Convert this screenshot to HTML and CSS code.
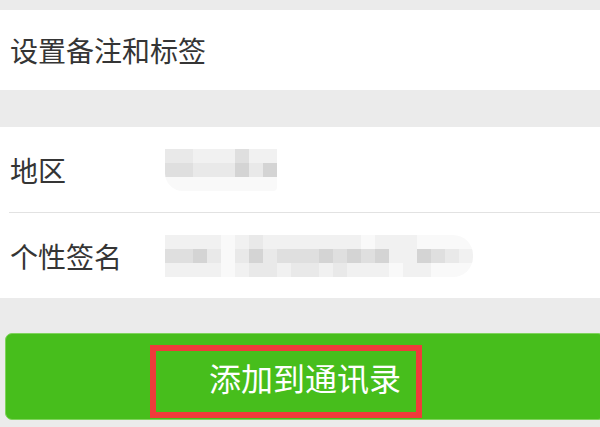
FILE: index.html
```html
<!DOCTYPE html>
<html lang="zh-CN">
<head>
  <meta charset="UTF-8" />
  <meta name="viewport" content="width=device-width, initial-scale=1.0"/>
  <title>详细资料</title>
  <link rel="stylesheet" href="styles.css">
</head>
<body>

  <div class="group">
    <div class="cell">设置备注和标签</div>
  </div>

  <div class="group">
    <div class="cell row">
      <span class="label">地区</span>
      <div class="mosaic short">
        <i class="s2"></i><i class="s2"></i><i class="s1"></i><i class="s1"></i><i class="s1"></i><i class="s3"></i><i class="s1"></i><i class="s1"></i>
        <i class="s3"></i><i class="s3"></i><i class="s2"></i><i class="s2"></i><i class="s2"></i><i class="s4"></i><i class="s2"></i><i class="s4"></i>
        <i class="s0"></i><i class="s0"></i><i class="s0"></i><i class="s0"></i><i class="s0"></i><i class="s0"></i><i class="s0"></i><i class="s0"></i>
      </div>
    </div>
    <div class="divider"></div>
    <div class="cell row">
      <span class="label">个性签名</span>
      <div class="mosaic long">
        <i class="s1"></i><i class="s1"></i><i class="s1"></i><i class="s1"></i><i class="s0"></i><i class="s1"></i><i class="s2"></i><i class="s1"></i><i class="s1"></i><i class="s1"></i><i class="s1"></i><i class="s1"></i><i class="s1"></i><i class="s1"></i><i class="s0"></i><i class="s1"></i><i class="s1"></i><i class="s1"></i><i class="s0"></i><i class="s0"></i><i class="s0"></i><i class="s0"></i>
        <i class="s3"></i><i class="s3"></i><i class="s4"></i><i class="s2"></i><i class="s0"></i><i class="s2"></i><i class="s4"></i><i class="s2"></i><i class="s3"></i><i class="s3"></i><i class="s3"></i><i class="s4"></i><i class="s3"></i><i class="s4"></i><i class="s3"></i><i class="s4"></i><i class="s1"></i><i class="s1"></i><i class="s4"></i><i class="s3"></i><i class="s2"></i><i class="s1"></i>
        <i class="s1"></i><i class="s1"></i><i class="s1"></i><i class="s1"></i><i class="s0"></i><i class="s1"></i><i class="s2"></i><i class="s2"></i><i class="s1"></i><i class="s2"></i><i class="s2"></i><i class="s1"></i><i class="s2"></i><i class="s1"></i><i class="s1"></i><i class="s1"></i><i class="s0"></i><i class="s1"></i><i class="s1"></i><i class="s0"></i><i class="s0"></i><i class="s0"></i>
      </div>
    </div>
  </div>

  <div class="actions">
    <button class="btn-add">
      添加到通讯录
      <span class="mark"></span>
    </button>
  </div>

</body>
</html>
```

FILE: styles.css
```css
body {
  font-family: "Noto Sans CJK SC", "Noto Sans", sans-serif;
  background: #ebebeb;
  margin: 0;
  padding: 10px 0 0;
  color: #353535;
  overflow: hidden;
}
.group {
  background: #fff;
  margin-bottom: 37px;
}
.group + .group {
  margin-bottom: 35px;
}
.cell {
  height: 80px;
  padding-left: 10px;
  font-size: 28px;
  line-height: 80px;
}
.row {
  display: flex;
  align-items: center;
  height: 85px;
  line-height: normal;
}
.label {
  width: 155px;
}
.divider {
  height: 1px;
  margin-left: 9px;
  background: #e2e2e2;
}
.mosaic {
  display: grid;
  grid-auto-rows: 14px;
  border-radius: 0 0 4px 18px;
  overflow: hidden;
}
.mosaic.short {
  grid-template-columns: repeat(8, 14px);
}
.mosaic.long {
  grid-template-columns: repeat(22, 14px);
  border-radius: 0 20px 20px 0;
}
.mosaic i {
  display: block;
}
.s0 { background: #f9f9f9; }
.s1 { background: #f1f1f1; }
.s2 { background: #e9e9e9; }
.s3 { background: #dfdfdf; }
.s4 { background: #d4d4d4; }

.actions {
  margin: 0 -5px 0 5px;
}
.btn-add {
  position: relative;
  display: block;
  width: 100%;
  height: 87px;
  padding: 0;
  border: 1px solid #7fd35c;
  border-radius: 7px;
  background: #47be1c;
  color: #fff;
  font-family: inherit;
  font-size: 32px;
  text-align: center;
}
.mark {
  position: absolute;
  left: 144px;
  top: 11px;
  width: 260px;
  height: 61px;
  border: 6px solid #ef3b3b;
}
```
